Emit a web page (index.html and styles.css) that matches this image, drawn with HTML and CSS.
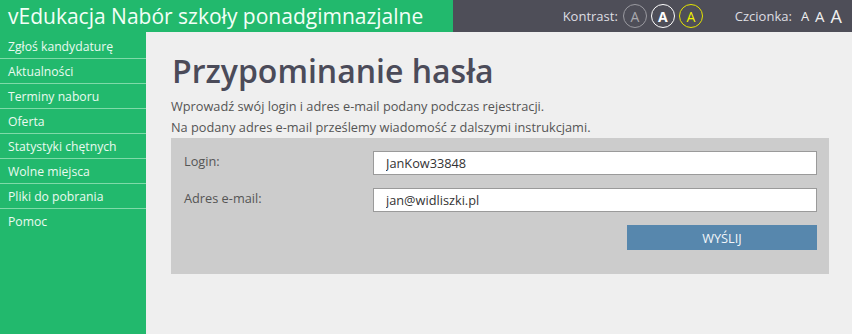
FILE: index.html
```
<!DOCTYPE html>
<html lang="pl">
<head>
<meta charset="utf-8">
<title>Przypominanie hasła</title>
<link rel="stylesheet" href="styles.css">
</head>
<body>
<header class="topbar">
  <div class="brand">vEdukacja Nabór szkoły ponadgimnazjalne</div>
  <div class="tools">
    <span class="tool-label">Kontrast:</span>
    <span class="contrast c-normal">A</span>
    <span class="contrast c-white">A</span>
    <span class="contrast c-yellow">A</span>
    <span class="tool-label font-label">Czcionka:</span>
    <span class="fsize fs1">A</span>
    <span class="fsize fs2">A</span>
    <span class="fsize fs3">A</span>
  </div>
</header>
<div class="layout">
  <nav class="sidebar">
    <a class="nav-item">Zgłoś kandydaturę</a>
    <a class="nav-item">Aktualności</a>
    <a class="nav-item">Terminy naboru</a>
    <a class="nav-item">Oferta</a>
    <a class="nav-item">Statystyki chętnych</a>
    <a class="nav-item">Wolne miejsca</a>
    <a class="nav-item">Pliki do pobrania</a>
    <a class="nav-item last">Pomoc</a>
  </nav>
  <main class="content">
    <h1 class="title">Przypominanie hasła</h1>
    <p class="intro">Wprowadź swój login i adres e-mail podany podczas rejestracji.<br>Na podany adres e-mail prześlemy wiadomość z dalszymi instrukcjami.</p>
    <form class="panel">
      <div class="row">
        <label class="label">Login:</label>
        <input class="field" type="text" value="JanKow33848">
      </div>
      <div class="row">
        <label class="label">Adres e-mail:</label>
        <input class="field" type="text" value="jan@widliszki.pl">
      </div>
      <div class="actions">
        <button class="submit" type="button">WYŚLIJ</button>
      </div>
    </form>
  </main>
</div>
</body>
</html>
```
FILE: styles.css
```
* { box-sizing: border-box; }
html, body { margin: 0; padding: 0; height: 100%; }
body {
  font-family: "Open Sans", "Noto Sans", sans-serif;
  background: #efefef;
  color: #555;
  overflow: hidden;
}
.topbar {
  display: flex;
  height: 32px;
}
.brand {
  width: 453px;
  background: #22b96d;
  color: #f2fff7;
  font-size: 21px;
  line-height: 32px;
  padding-left: 8px;
  white-space: nowrap;
}
.tools {
  flex: 1;
  background: #4e4e58;
  display: flex;
  align-items: center;
  justify-content: flex-end;
  padding-right: 10px;
  color: #dedee2;
  font-size: 13px;
}
.tool-label { margin-right: 5px; }
.font-label { margin-left: 32px; margin-right: 9px; }
.contrast {
  width: 24px;
  height: 24px;
  border-radius: 50%;
  display: flex;
  align-items: center;
  justify-content: center;
  font-size: 14px;
  margin-right: 4px;
}
.c-normal { border: 1px solid #9a9aa0; color: #a8a8ae; }
.c-white { border: 1px solid #ffffff; color: #ffffff; font-weight: 700; }
.c-yellow { border: 1px solid #e6e600; color: #f0f000; margin-right: 0; }
.fsize { color: #f0f0f0; margin-left: 6px; }
.fs1 { font-size: 13px; margin-left: 0; }
.fs2 { font-size: 15px; }
.fs3 { font-size: 18px; }
.layout {
  display: flex;
  height: calc(100% - 32px);
}
.sidebar {
  width: 146px;
  background: #22b96d;
  display: flex;
  flex-direction: column;
  padding-top: 2px;
}
.nav-item {
  display: block;
  height: 25px;
  line-height: 25px;
  padding-left: 8px;
  font-size: 12.2px;
  color: #eafaf0;
  border-bottom: 1px solid #7fdaa8;
  white-space: nowrap;
}
.nav-item.last { border-bottom: none; }
.content {
  flex: 1;
  padding: 0 23px 0 25px;
}
.title {
  margin: 16px 0 0 1px;
  font-size: 32px;
  font-weight: 600;
  color: #4b4b59;
  line-height: 46px;
}
.intro {
  margin: 2px 0 0 0;
  font-size: 12.75px;
  line-height: 21px;
  color: #555;
}
.panel {
  margin-top: 0;
  background: #cccccc;
  padding: 13px 12px 24px 13px;
}
.row {
  display: flex;
  align-items: center;
  margin-bottom: 13px;
}
.label {
  width: 189px;
  font-size: 12.75px;
  color: #555;
  padding-bottom: 4px;
}
.field {
  flex: 1;
  height: 24px;
  border: 1px solid #9a9a9a;
  background: #fff;
  font-family: inherit;
  font-size: 12.75px;
  color: #333;
  padding: 0 12px;
}
.actions {
  display: flex;
  justify-content: flex-end;
}
.submit {
  width: 190px;
  height: 25px;
  background: #5787ad;
  color: #f2f6fa;
  border: none;
  font-family: inherit;
  font-size: 12.75px;
  padding: 0;
}
```
